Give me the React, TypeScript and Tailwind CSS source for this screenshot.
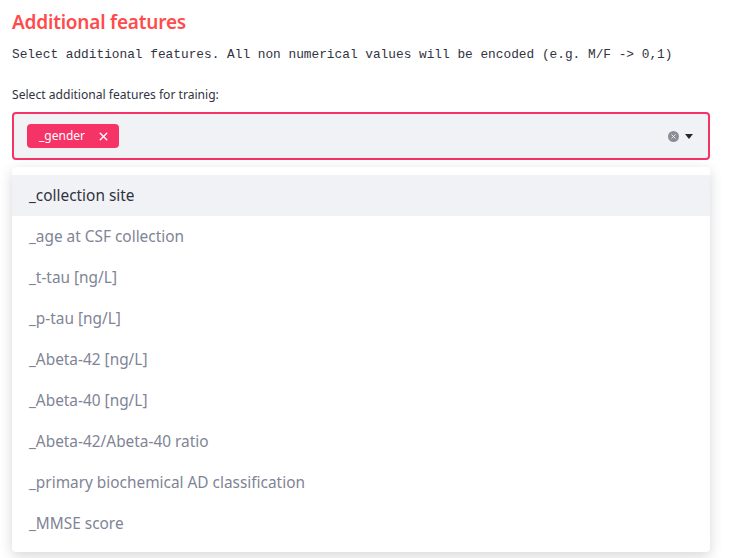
import { X } from "lucide-react";

const options = [
  "_collection site",
  "_age at CSF collection",
  "_t-tau [ng/L]",
  "_p-tau [ng/L]",
  "_Abeta-42 [ng/L]",
  "_Abeta-40 [ng/L]",
  "_Abeta-42/Abeta-40 ratio",
  "_primary biochemical AD classification",
  "_MMSE score",
];

export default function App() {
  return (
    <div className="min-h-[558px] w-[734px] bg-white px-3 pt-[10px] font-['Noto_Sans',Inter,sans-serif] text-[#31333f]">
      <h2 className="text-[19px] font-semibold leading-[24px] text-[#ff4b4b] tracking-[-0.2px]">
        Additional features
      </h2>
      <p className="mt-[12px] font-['Liberation_Mono',monospace] text-[12.8px] leading-[18px] text-[#31333f]">
        Select additional features. All non numerical values will be encoded (e.g. M/F -&gt; 0,1)
      </p>

      <label className="mt-[22px] block text-[12.1px] leading-[18px] text-[#31333f]">
        Select additional features for trainig:
      </label>

      <div className="mt-[8px] flex h-[48px] w-[698px] items-center rounded-[4px] border-2 border-[#f63366] bg-[#f0f2f6] pl-[13px] pr-[15px]">
        <span className="flex h-[24px] items-center gap-[12px] rounded-[4px] bg-[#f63366] pl-[12px] pr-[9px] text-[12px] text-white">
          _gender
          <X size={13} strokeWidth={2.6} />
        </span>
        <div className="flex-1" />
        <span className="flex h-[11px] w-[11px] items-center justify-center rounded-full bg-[#8c8d96]">
          <X size={7} strokeWidth={3} className="text-[#f0f2f6]" />
        </span>
        <svg width="8" height="5" viewBox="0 0 8 5" className="ml-[6px]">
          <path d="M0 0h8L4 5z" fill="#262730" />
        </svg>
      </div>

      <ul className="mt-[7px] w-[698px] rounded-[4px] bg-white py-[8px] shadow-[0_4px_14px_rgba(0,0,0,0.16)]">
        {options.map((o, i) => (
          <li
            key={o}
            className={
              i === 0
                ? "flex h-[41px] items-center bg-[#f0f2f6] pl-[17px] text-[15.4px] text-[#31333f]"
                : "flex h-[41px] items-center pl-[17px] text-[15.4px] text-[#808495]"
            }
          >
            {o}
          </li>
        ))}
      </ul>
    </div>
  );
}
